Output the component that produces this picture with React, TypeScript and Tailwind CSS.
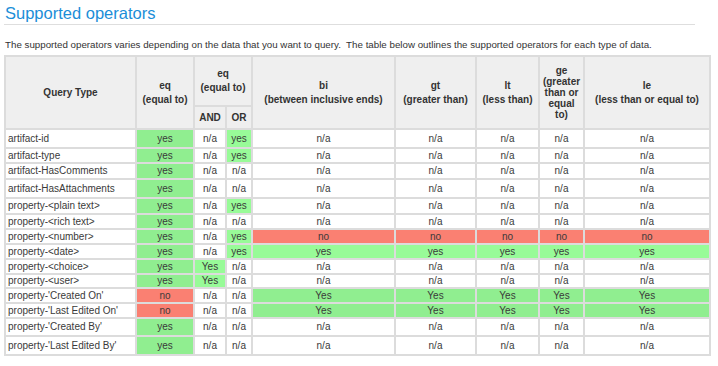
import React from "react";

type Cell = { v: string; c?: "g" | "p" | "r" };

const bg: Record<string, string> = {
  g: "bg-[#90ee90]",
  p: "bg-[#98fb98]",
  r: "bg-[#fa8072]",
};

const na: Cell = { v: "n/a" };
const rep = (c: Cell): Cell[] => [c, c, c, c, c];

const rows: { name: string; h: string; cells: Cell[] }[] = [
  { name: "artifact-id", h: "h-[19px]", cells: [{ v: "yes", c: "g" }, na, { v: "yes", c: "p" }, ...rep(na)] },
  { name: "artifact-type", h: "h-[15px]", cells: [{ v: "yes", c: "g" }, na, { v: "yes", c: "p" }, ...rep(na)] },
  { name: "artifact-HasComments", h: "h-[16px]", cells: [{ v: "yes", c: "g" }, na, na, ...rep(na)] },
  { name: "artifact-HasAttachments", h: "h-[19px]", cells: [{ v: "yes", c: "g" }, na, na, ...rep(na)] },
  { name: "property-<plain text>", h: "h-[16px]", cells: [{ v: "yes", c: "g" }, na, { v: "yes", c: "p" }, ...rep(na)] },
  { name: "property-<rich text>", h: "h-[15px]", cells: [{ v: "yes", c: "g" }, na, na, ...rep(na)] },
  { name: "property-<number>", h: "h-[15px]", cells: [{ v: "yes", c: "g" }, na, { v: "yes", c: "p" }, ...rep({ v: "no", c: "r" })] },
  { name: "property-<date>", h: "h-[15px]", cells: [{ v: "yes", c: "g" }, na, { v: "yes", c: "p" }, ...rep({ v: "yes", c: "p" })] },
  { name: "property-<choice>", h: "h-[15px]", cells: [{ v: "yes", c: "g" }, { v: "Yes", c: "p" }, na, ...rep(na)] },
  { name: "property-<user>", h: "h-[14px]", cells: [{ v: "yes", c: "g" }, { v: "Yes", c: "p" }, na, ...rep(na)] },
  { name: "property-'Created On'", h: "h-[15px]", cells: [{ v: "no", c: "r" }, na, na, ...rep({ v: "Yes", c: "g" })] },
  { name: "property-'Last Edited On'", h: "h-[15px]", cells: [{ v: "no", c: "r" }, na, na, ...rep({ v: "Yes", c: "g" })] },
  { name: "property-'Created By'", h: "h-[18px]", cells: [{ v: "yes", c: "g" }, na, na, ...rep(na)] },
  { name: "property-'Last Edited By'", h: "h-[19px]", cells: [{ v: "yes", c: "g" }, na, na, ...rep(na)] },
];

const th = "border-2 border-[#dcdcdc] bg-[#efefef] font-bold text-center align-middle leading-[14px] px-[2px] text-[#333]";
const td = "border-2 border-[#dcdcdc] leading-[12px] align-middle p-0";

export default function App() {
  return (
    <div className="h-[366px] w-[718px] overflow-hidden bg-white px-[4px] pt-[3px] font-['Liberation_Sans',Arial,sans-serif] text-[#3a3a3a]">
      <h2 className="w-[691px] border-b border-[#dedede] pb-[1px] pl-[1px] text-[16.5px] leading-[20px] text-[#1b8ed8]">
        Supported operators
      </h2>
      <p className="mt-[14px] pl-[1px] text-[9.75px] leading-[12px] text-[#333]">
        The supported operators varies depending on the data that you want to query.&nbsp; The table below outlines the
        supported operators for each type of data.
      </p>
      <table className="mt-[4px] w-[705px] table-fixed border-collapse text-[10px]">
        <colgroup>
          <col className="w-[131px]" />
          <col className="w-[58px]" />
          <col className="w-[32px]" />
          <col className="w-[26px]" />
          <col className="w-[143px]" />
          <col className="w-[81px]" />
          <col className="w-[63px]" />
          <col className="w-[45px]" />
          <col className="w-[126px]" />
        </colgroup>
        <thead>
          <tr className="h-[50px]">
            <th rowSpan={2} className={th}>Query Type</th>
            <th rowSpan={2} className={th}>eq<br />(equal to)</th>
            <th colSpan={2} className={th}>eq<br />(equal to)</th>
            <th rowSpan={2} className={th}>bi<br />(between inclusive ends)</th>
            <th rowSpan={2} className={th}>gt<br />(greater than)</th>
            <th rowSpan={2} className={th}>lt<br />(less than)</th>
            <th rowSpan={2} className={`${th} !leading-[11px]`}>ge<br />(greater than or equal to)</th>
            <th rowSpan={2} className={th}>le<br />(less than or equal to)</th>
          </tr>
          <tr className="h-[23px]">
            <th className={th}>AND</th>
            <th className={th}>OR</th>
          </tr>
        </thead>
        <tbody>
          {rows.map((r) => (
            <tr key={r.name} className={r.h}>
              <td className={`${td} pl-[2px] text-left`}>{r.name}</td>
              {r.cells.map((c, i) => (
                <td key={i} className={`${td} text-center ${c.c ? bg[c.c] : ""}`}>
                  {c.v}
                </td>
              ))}
            </tr>
          ))}
        </tbody>
      </table>
    </div>
  );
}
